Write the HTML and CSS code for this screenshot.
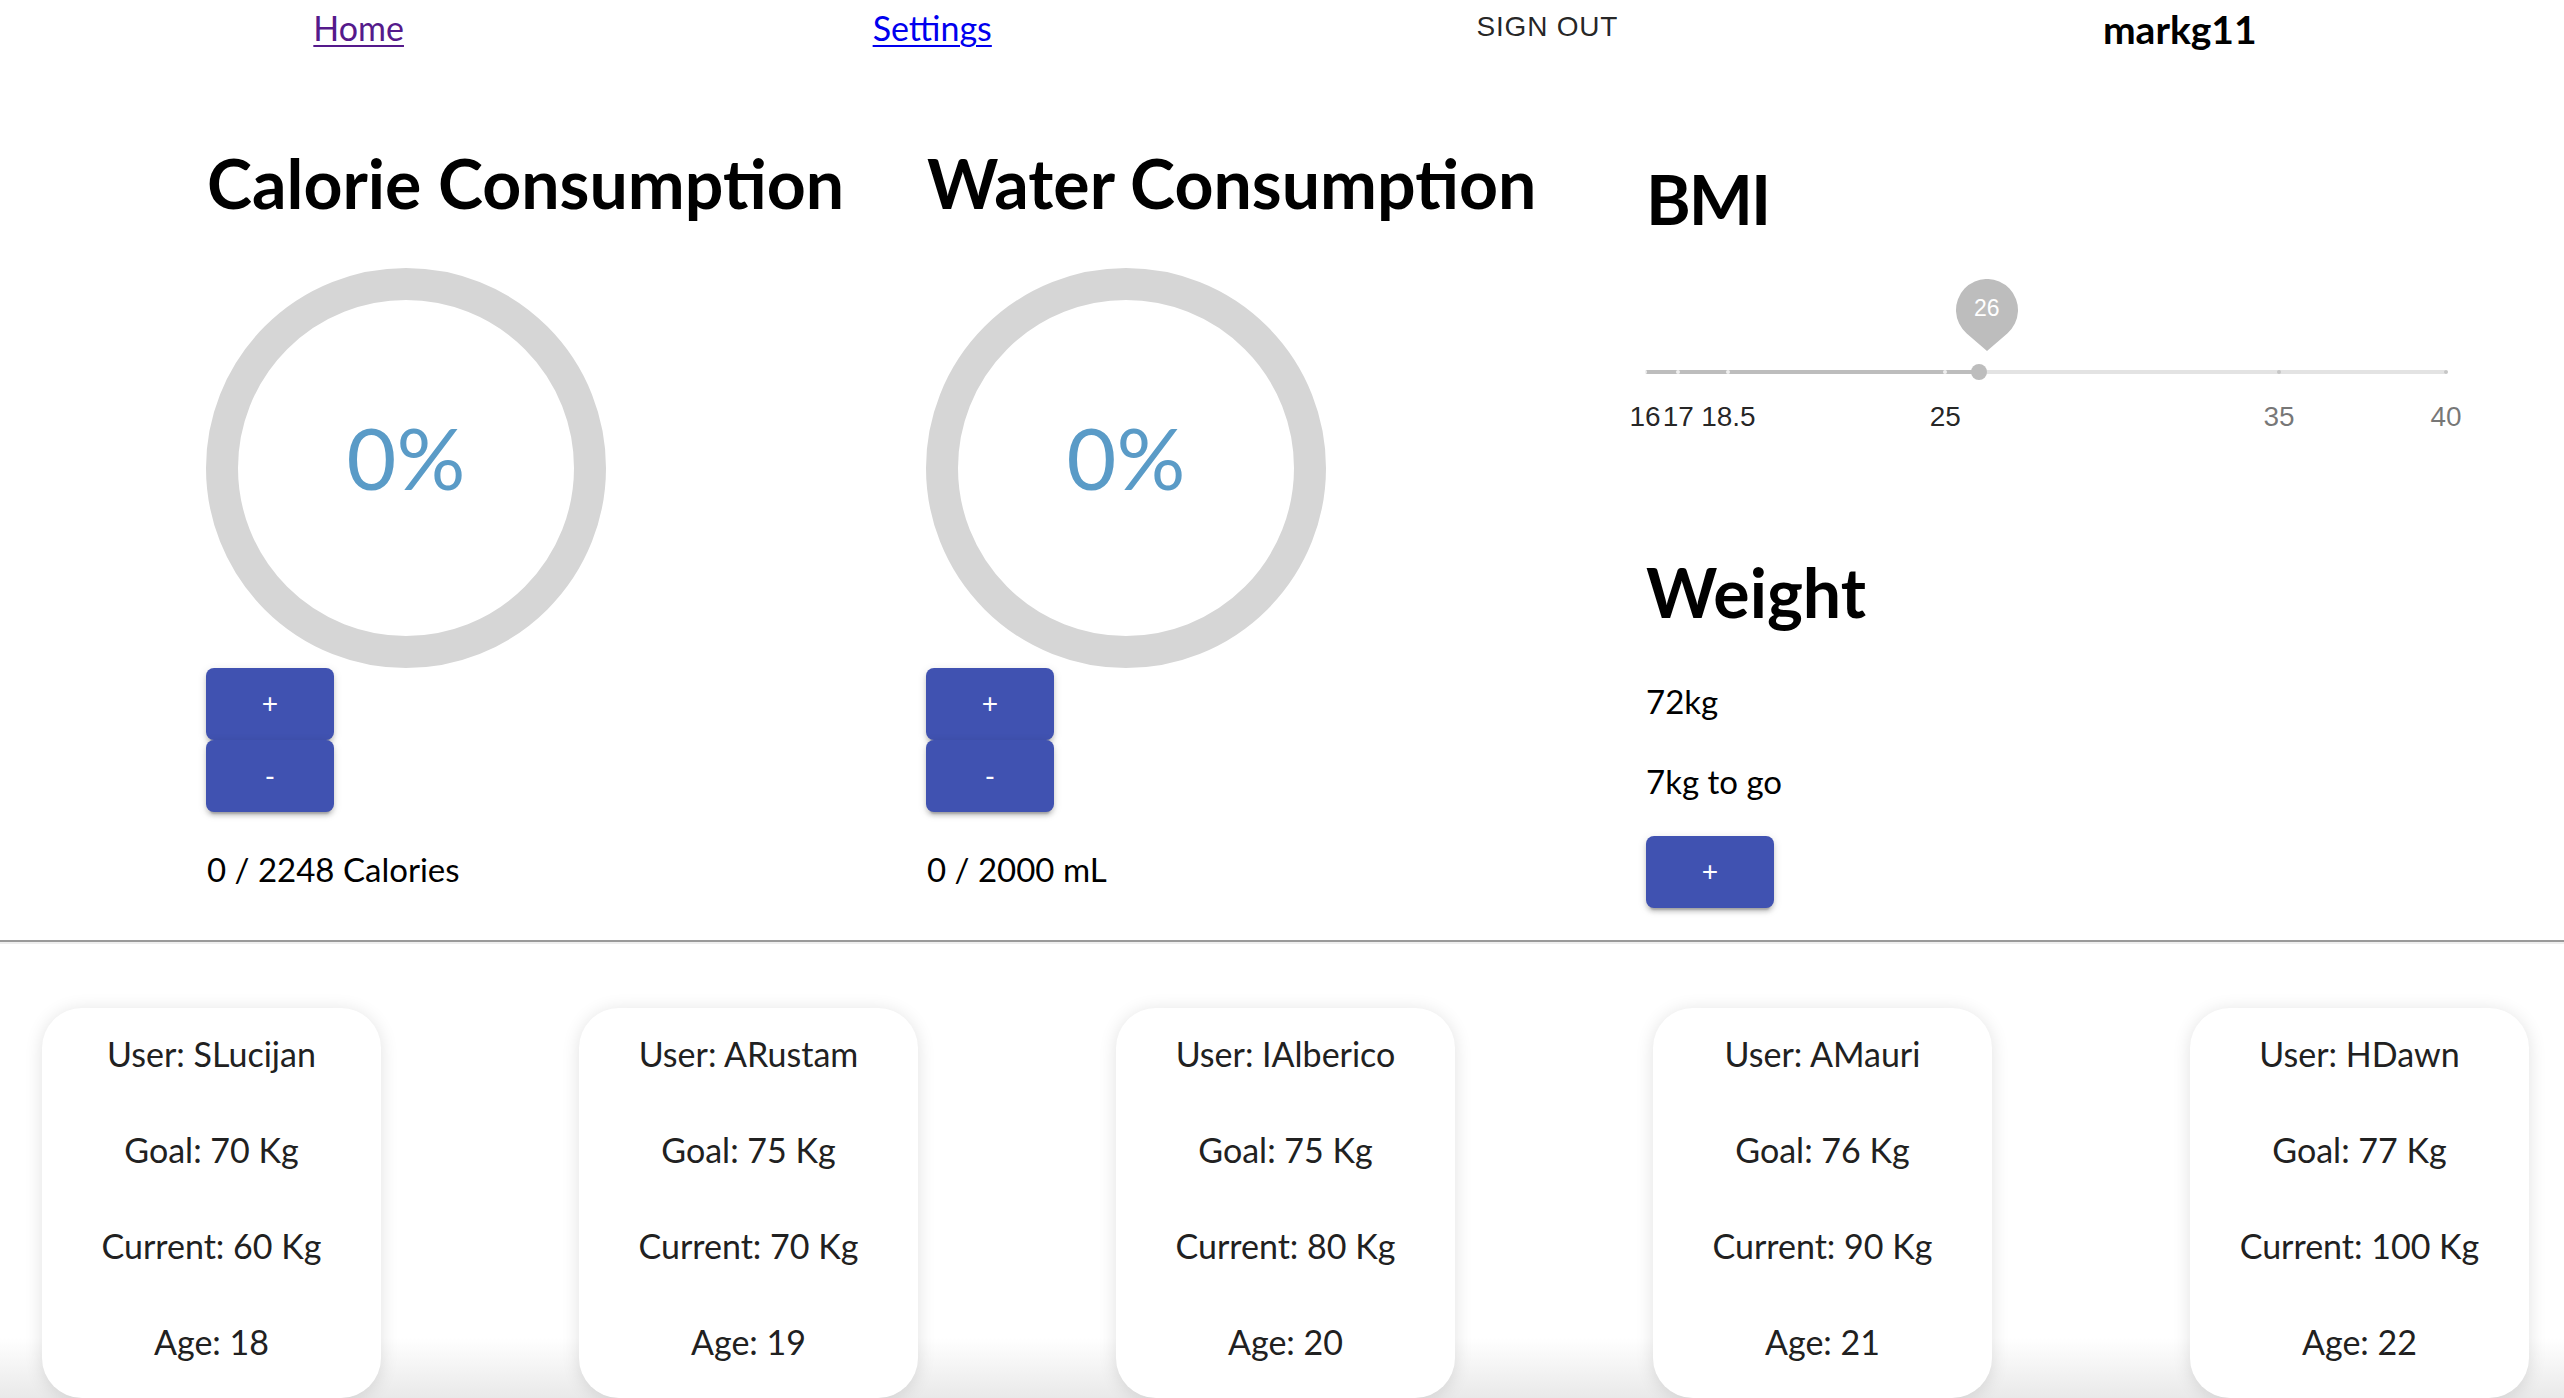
FILE: index.html
```html
<!DOCTYPE html>
<html lang="en">
<head>
<meta charset="utf-8">
<title>Dashboard</title>
<link rel="stylesheet" href="styles.css">
</head>
<body>
<nav class="topnav">
  <a class="nav-link nav-link--visited" href="#home">Home</a>
  <a class="nav-link" href="#settings">Settings</a>
  <button class="signout" type="button">Sign out</button>
  <h3 class="username">markg11</h3>
</nav>

<main class="dashboard">
  <section class="tracker">
    <h1 class="title">Calorie Consumption</h1>
    <svg class="ring" viewBox="0 0 100 100" width="400" height="400">
      <circle class="ring-trail" cx="50" cy="50" r="46"></circle>
      <text class="ring-text" x="50" y="55.4" text-anchor="middle">0%</text>
    </svg>
    <div class="stepper">
      <button class="btn" type="button">+</button>
      <button class="btn" type="button">-</button>
    </div>
    <p class="amount amount--total">0 / 2248 Calories</p>
  </section>

  <section class="tracker">
    <h1 class="title">Water Consumption</h1>
    <svg class="ring" viewBox="0 0 100 100" width="400" height="400">
      <circle class="ring-trail" cx="50" cy="50" r="46"></circle>
      <text class="ring-text" x="50" y="55.4" text-anchor="middle">0%</text>
    </svg>
    <div class="stepper">
      <button class="btn" type="button">+</button>
      <button class="btn" type="button">-</button>
    </div>
    <p class="amount amount--total">0 / 2000 mL</p>
  </section>

  <section class="stats">
    <h1 class="title title--bmi">BMI</h1>
    <div class="slider">
      <div class="slider-rail"></div>
      <div class="slider-track" style="width:41.667%"></div>
      <span class="slider-mark slider-mark--active" style="left:0%"></span>
      <span class="slider-mark slider-mark--active" style="left:4.167%"></span>
      <span class="slider-mark slider-mark--active" style="left:10.417%"></span>
      <span class="slider-mark slider-mark--active" style="left:37.5%"></span>
      <span class="slider-mark" style="left:79.167%"></span>
      <span class="slider-mark" style="left:100%"></span>
      <span class="slider-thumb" style="left:41.667%"></span>
      <span class="slider-value" style="left:41.667%">
        <svg class="slider-balloon" viewBox="0 0 64 72" width="64" height="72">
          <path d="M32 72 L11.7 54.4 A31 31 0 1 1 52.3 54.4 Z"></path>
        </svg>
        <span class="slider-value-text">26</span>
      </span>
      <span class="slider-label slider-label--active" style="left:0%">16</span>
      <span class="slider-label slider-label--active" style="left:4.167%">17</span>
      <span class="slider-label slider-label--active" style="left:10.417%">18.5</span>
      <span class="slider-label slider-label--active" style="left:37.5%">25</span>
      <span class="slider-label" style="left:79.167%">35</span>
      <span class="slider-label" style="left:100%">40</span>
    </div>
    <h1 class="title title--weight">Weight</h1>
    <p class="amount amount--weight">72kg</p>
    <p class="amount amount--togo">7kg to go</p>
    <button class="btn btn--add" type="button">+</button>
  </section>
</main>

<hr class="divider">

<section class="leaderboard">
  <article class="card">
    <p>User: SLucijan</p>
    <p>Goal: 70 Kg</p>
    <p>Current: 60 Kg</p>
    <p>Age: 18</p>
  </article>
  <article class="card">
    <p>User: ARustam</p>
    <p>Goal: 75 Kg</p>
    <p>Current: 70 Kg</p>
    <p>Age: 19</p>
  </article>
  <article class="card">
    <p>User: IAlberico</p>
    <p>Goal: 75 Kg</p>
    <p>Current: 80 Kg</p>
    <p>Age: 20</p>
  </article>
  <article class="card">
    <p>User: AMauri</p>
    <p>Goal: 76 Kg</p>
    <p>Current: 90 Kg</p>
    <p>Age: 21</p>
  </article>
  <article class="card">
    <p>User: HDawn</p>
    <p>Goal: 77 Kg</p>
    <p>Current: 100 Kg</p>
    <p>Age: 22</p>
  </article>
</section>
</body>
</html>
```

FILE: styles.css
```css
* {
  box-sizing: border-box;
}

html, body {
  margin: 0;
  padding: 0;
}

body {
  height: 100vh;
  overflow: hidden;
  display: flex;
  flex-direction: column;
  background: #ffffff;
  color: #000000;
  font-family: Lato, "Noto Sans", sans-serif;
}

/* ---------- top navigation ---------- */
.topnav {
  height: 60px;
  flex: 0 0 60px;
  display: flex;
  justify-content: space-around;
  align-items: flex-start;
  padding: 0 73px 0 79px;
}

.nav-link {
  margin-top: 9px;
  font-size: 34px;
  line-height: 38px;
  color: #0000ee;
  text-decoration: underline;
  text-decoration-thickness: 2px;
  text-underline-offset: 4px;
}

.nav-link--visited {
  color: #551a8b;
}

.signout {
  margin-top: 11px;
  padding: 0 16px;
  border: none;
  background: transparent;
  font-family: "Liberation Sans", Arial, sans-serif;
  font-size: 28px;
  line-height: 32px;
  letter-spacing: 0.8px;
  text-transform: uppercase;
  color: rgba(0, 0, 0, 0.87);
}

.username {
  margin: 7px 0 0;
  font-size: 39px;
  line-height: 44px;
  font-weight: 700;
}

/* ---------- dashboard ---------- */
.dashboard {
  height: 880px;
  flex: 0 0 880px;
  display: flex;
  padding-left: 207px;
}

.tracker {
  width: 720px;
  display: flex;
  flex-direction: column;
  align-items: flex-start;
}

.tracker + .tracker {
  width: 719px;
}

.stats {
  flex: 1;
  display: flex;
  flex-direction: column;
  align-items: flex-start;
}

.title {
  margin: 82px 0 0;
  font-size: 68px;
  line-height: 82px;
  font-weight: 700;
  white-space: nowrap;
}

.title--bmi {
  margin-top: 98px;
  letter-spacing: -2px;
}

.title--weight {
  margin-top: 111px;
}

.ring {
  display: block;
  margin-top: 44px;
  margin-left: -1px;
  width: 400px;
  height: 400px;
}

.ring-trail {
  fill: none;
  stroke: #d6d6d6;
  stroke-width: 8;
}

.ring-text {
  fill: #5a9bc7;
  font-family: Lato, "Noto Sans", sans-serif;
  font-size: 21.5px;
  font-weight: 400;
}

.stepper {
  display: flex;
  flex-direction: column;
  margin-left: -1px;
}

.btn {
  display: block;
  width: 128px;
  height: 72px;
  padding: 0;
  border: none;
  border-radius: 8px;
  background: #4052b1;
  color: #ffffff;
  font-family: "Liberation Sans", Arial, sans-serif;
  font-size: 28px;
  line-height: 72px;
  box-shadow: 0 6px 2px -4px rgba(0, 0, 0, 0.2),
              0 4px 4px 0 rgba(0, 0, 0, 0.14),
              0 2px 10px 0 rgba(0, 0, 0, 0.12);
}

.amount {
  margin: 0;
  font-size: 33px;
  line-height: 41px;
}

.amount--total {
  margin-top: 37px;
}

.amount--weight {
  margin-top: 48px;
}

.amount--togo {
  margin-top: 39px;
}

.btn--add {
  margin-top: 34px;
}

/* ---------- BMI slider ---------- */
.slider {
  position: relative;
  width: 801px;
  height: 170px;
  margin-top: 30px;
  margin-left: -1px;
}

.slider-rail,
.slider-track {
  position: absolute;
  left: 0;
  top: 100px;
  height: 4px;
  border-radius: 2px;
}

.slider-rail {
  width: 100%;
  background: #e3e3e3;
}

.slider-track {
  background: #bdbdbd;
}

.slider-mark {
  position: absolute;
  top: 100px;
  width: 4px;
  height: 4px;
  border-radius: 2px;
  margin-left: -2px;
  background: #c6c6c6;
}

.slider-mark--active {
  background: rgba(255, 255, 255, 0.75);
}

.slider-thumb {
  position: absolute;
  top: 94px;
  width: 16px;
  height: 16px;
  margin-left: -8px;
  border-radius: 50%;
  background: #bdbdbd;
}

.slider-value {
  position: absolute;
  top: 9px;
  width: 64px;
  height: 72px;
  margin-left: -24px;
}

.slider-balloon {
  display: block;
}

.slider-balloon path {
  fill: #bdbdbd;
}

.slider-value-text {
  position: absolute;
  left: 0;
  top: 15px;
  width: 64px;
  text-align: center;
  font-family: "Liberation Sans", Arial, sans-serif;
  font-size: 23px;
  line-height: 28px;
  color: #ffffff;
}

.slider-label {
  position: absolute;
  top: 131px;
  transform: translateX(-50%);
  font-family: "Liberation Sans", Arial, sans-serif;
  font-size: 28px;
  line-height: 32px;
  color: rgba(0, 0, 0, 0.54);
  white-space: nowrap;
}

.slider-label--active {
  color: rgba(0, 0, 0, 0.87);
}

/* ---------- divider ---------- */
.divider {
  flex: 0 0 4px;
  height: 4px;
  margin: 0;
  border: none;
  border-top: 2px solid #9a9a9a;
  border-bottom: 2px solid #eeeeee;
}

/* ---------- leaderboard ---------- */
.leaderboard {
  flex: 1;
  display: flex;
  justify-content: space-between;
  align-items: flex-start;
  padding: 64px 35px 0 42px;
  background: linear-gradient(to bottom, #ffffff 0, #ffffff calc(100% - 60px), #e9e9e9 100%);
}

.card {
  width: 339px;
  height: 390px;
  flex: 0 0 339px;
  display: flex;
  flex-direction: column;
  gap: 36px;
  padding: 16px 0 26px;
  border-radius: 40px;
  background: #ffffff;
  box-shadow: 0 2px 18px rgba(0, 0, 0, 0.12);
}

.card p {
  margin: 0;
  font-size: 34px;
  line-height: 60px;
  text-align: center;
  color: #212121;
}
```
